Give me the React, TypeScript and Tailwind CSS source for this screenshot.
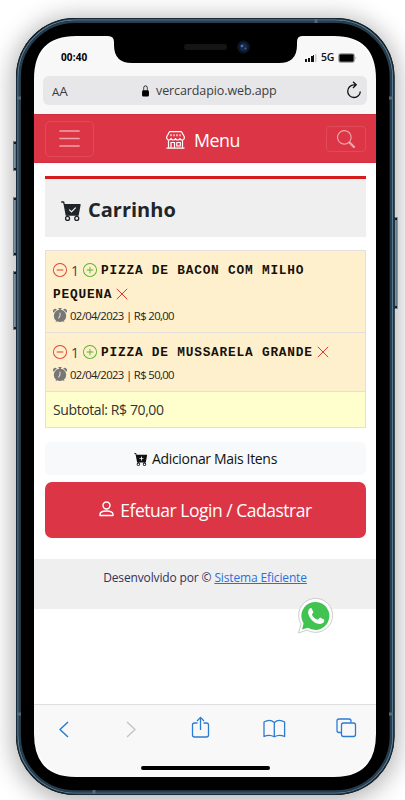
import React from "react";
import {
  BsSearch, BsCartCheckFill, BsCartPlusFill, BsDashCircle, BsPlusCircle,
  BsAlarmFill, BsLockFill,
} from "react-icons/bs";

const ui = "font-['Open_Sans','Noto_Sans',sans-serif]";

function Cross() {
  return (
    <svg viewBox="0 0 12 12" className="ml-1 inline-block h-3 w-3" stroke="#e0382c" strokeWidth="1" fill="none">
      <path d="M.8.8l10.4 10.4M11.2.8L.8 11.2" />
    </svg>
  );
}

function Item({ lines, price }: { lines: string[]; price: string }) {
  return (
    <li className="border-b border-[#e2e0d8] bg-[#fff0cd] pl-[7px] pt-[7px] pb-[4px]">
      <div className="flex h-[24px] items-center whitespace-nowrap">
        <BsDashCircle className="h-[14px] w-[14px] text-[#e23d30]" />
        <span className="w-[16px] text-center text-[14px] text-[#444]">1</span>
        <BsPlusCircle className="h-[14px] w-[14px] text-[#55b32b]" />
        <span className="ml-[4px] mt-[2px] font-['Liberation_Mono',monospace] text-[12.8px] tracking-[0.79px] font-bold text-[#16110b]">{lines[0]}</span>
        {lines.length === 1 && <Cross />}
      </div>
      {lines.length > 1 && (
        <div className="flex h-[23px] items-center whitespace-nowrap">
          <span className="mt-[2px] font-['Liberation_Mono',monospace] text-[12.8px] tracking-[0.79px] font-bold text-[#16110b]">{lines[1]}</span>
          <Cross />
        </div>
      )}
      <div className="flex h-[23px] items-center whitespace-nowrap">
        <BsAlarmFill className="mb-[3px] h-[14px] w-[14px] text-[#777]" />
        <span className="ml-[3px] text-[11.3px] tracking-[-0.63px] text-[#222]">02/04/2023 | R$ {price}</span>
      </div>
    </li>
  );
}

function StatusBar() {
  return (
    <div className="flex h-[40px] shrink-0 justify-between">
      <span className="ml-[27px] mt-[13px] text-[10px] font-bold leading-[16px] tracking-[0.15px] text-black">00:40</span>
      <div className="mr-[19px] mt-[15px] flex h-[14px] items-center">
        <svg width="12" height="8" viewBox="0 0 12 8">
          <path d="M0 5h2v3H0zM3 4h2v4H3zM6 2h2v6H6z" fill="#111" />
          <path d="M8 1h1v7H8z" fill="#111" />
          <path d="M10 0h1.5v8H10z" fill="#ccc" />
        </svg>
        <span className="ml-[4px] text-[10.5px] font-semibold tracking-[-0.3px] text-[#111]">5G</span>
        <svg className="ml-[4px]" width="19" height="10" viewBox="0 0 19 10">
          <rect x=".5" y=".5" width="16" height="9" rx="2" fill="none" stroke="#aaa" />
          <rect x="1.3" y="1.3" width="14.4" height="7.4" rx="1" fill="#000" />
          <path d="M17.5 3.5q1.4 1.5 0 3z" fill="#888" />
        </svg>
      </div>
    </div>
  );
}

function AddressBar() {
  return (
    <div className="mx-[9px] flex h-[29px] shrink-0 items-center rounded-[6px] bg-[#e7e7ea] text-[#3d3d40]">
      <span className="ml-[9px] w-[88px] leading-none"><span className="text-[11.5px]">A</span><span className="text-[13.5px]">A</span></span>
      <BsLockFill className="h-[12px] w-[11px] text-black" />
      <span className="ml-[5px] mt-[1px] whitespace-nowrap text-[12.5px] tracking-[-0.1px]">vercardapio.web.app</span>
      <svg className="mb-[2px] ml-auto mr-[5px]" width="16" height="18" viewBox="0 0 16 18" fill="none" stroke="#111" strokeWidth="1.3">
        <path d="M9.5 3.9H8a6.3 6.3 0 1 0 6.3 6.5M7 .8l3.2 3L7 7" />
      </svg>
    </div>
  );
}

function StoreIcon() {
  return (
    <svg width="19" height="18" viewBox="0 0 19 18" fill="none" stroke="white" strokeWidth="1.2" strokeLinejoin="round">
      <path d="M3.500.7h12l2.800 5v1.600q-.4 1.700-2.200 1.700t-2.200-1.500q-.5 1.500-2.200 1.500T9.500 7.500Q9 9 7.300 9T5.100 7.500Q4.600 9 2.900 9T.7 7.300V5.700zM2.500 9.500v7.500M16.500 9.500v7.500M.5 17.100h18M5 17v-5.500h3.500V17M10.800 11.500h3.500v3.500h-3.500zM5 3.200v2M8 3.200v2M11 3.200v2M14 3.200v2" />
    </svg>
  );
}

function Navbar() {
  return (
    <header className="mt-[9px] flex h-[49px] shrink-0 items-center border-y border-[#cf3141] bg-[#dc3545] pl-[11px] pr-[10px]">
      <div className="flex h-[36px] w-[49px] items-center justify-center rounded-[5px] border border-[#e14b59]">
        <svg width="21" height="17" viewBox="0 0 21 17" stroke="#f1a2aa" strokeWidth="1.7" strokeLinecap="round">
          <path d="M1 1h19M1 8.500h19M1 16h19" />
        </svg>
      </div>
      <div className="ml-[72px] mt-[3px] flex items-center text-white">
        <StoreIcon />
        <span className="ml-[9px] text-[17.8px] leading-[24px] tracking-[-0.5px]">Menu</span>
      </div>
      <div className="ml-auto flex h-[26px] w-[40px] items-center justify-center rounded-[4px] border border-[#e14b59] text-[#f1a2aa]">
        <BsSearch className="h-[18px] w-[18px]" />
      </div>
    </header>
  );
}

function Toolbar() {
  return (
    <div className="flex h-[73px] shrink-0 flex-col border-t border-[#dfdfe1] bg-[#f8f8f8]">
      <svg width="342" height="60" viewBox="34 705 342 60" fill="none" stroke="#2b7bd3" strokeWidth="1.3" strokeLinejoin="round">
        <path d="M68 722l-8 7.5 8 7.5" strokeWidth="1.5" />
        <path d="M127 722l8 7.5-8 7.5" stroke="#c5c5c8" strokeWidth="1.5" />
        <path d="M197.500 723h-3q-2 0-2 2v10q0 2 2 2h12q2 0 2-2v-10q0-2-2-2h-3M200.500 730v-12.500M197 721l3.500-3.600 3.500 3.600" />
        <path d="M274.300 722.500q-4.500-4-10.300-.5v14.500q5.500-2.500 10.300.3q4.800-2.800 10.300-.3v-14.500q-5.800-3.500-10.300.5zv14" />
        <rect x="341.500" y="723" width="14" height="13.500" rx="2" />
        <path d="M341 732.500h-2q-2 0-2-2v-9.500q0-2 2-2h10q2 0 2 2v1.500" />
      </svg>
      <div className="mx-auto mt-[1px] h-[4px] w-[129px] shrink-0 rounded-full bg-black" />
    </div>
  );
}

function Frame() {
  return (
    <svg className="pointer-events-none absolute inset-0" width="405" height="800" viewBox="0 0 405 800">
      <defs>
        <linearGradient id="button" x1="0" x2="1">
          <stop offset="0" stopColor="#52697a" /><stop offset=".5" stopColor="#8296a3" /><stop offset="1" stopColor="#405767" />
        </linearGradient>
      </defs>
      {[[13, 141, 30], [13, 197, 59], [13, 271, 59], [394, 217, 92]].map(([x, y, h]) => (
        <g key={y}>
          <rect x={x} y={y} width="3.500" height={h} fill="url(#button)" />
          <path d={`M${x + 1} ${y + 1}h2v2h-2zM${x + 1} ${y + h - 3}h2v2h-2z`} fill="#101c24" />
        </g>
      ))}
      <path fillRule="evenodd" fill="#000" d="M74.500 18H336A58.500 58.500 0 0 1 394.500 76.500V736.500A58.500 58.500 0 0 1 336 795H74.500A58.500 58.500 0 0 1 16 736.500V76.500A58.500 58.500 0 0 1 74.500 18ZM76 36Q34 36 34 79V734Q34 777 76 777H334Q376 777 376 734V79Q376 36 334 36H302Q297 36 297 42V45Q297 63 279 63H132Q114 63 114 45V42Q114 36 108 36Z" />
      <rect x="16.500" y="18.500" width="377.500" height="776" rx="58" fill="none" stroke="#172b3a" />
      <rect x="18" y="20" width="374.500" height="773" rx="57" fill="none" stroke="#58788d" strokeWidth="1.600" />
      <rect x="19.800" y="21.800" width="371" height="769.500" rx="55" fill="none" stroke="#263e50" strokeWidth="2.300" />
      <path d="M17 98h4M389 98h4M17 714h4M389 714h4M316 19v4M94 790v4" stroke="#596975" strokeWidth="3" />
      <rect x="184" y="44" width="43" height="6" rx="3" fill="#151515" />
      <circle cx="243.500" cy="47" r="6.500" fill="#0c1524" />
      <circle cx="243.500" cy="47" r="4" fill="#16294e" />
      <circle cx="242" cy="46" r="1.300" fill="#5474ad" />
      <circle cx="245.500" cy="48.500" r="1" fill="#405f91" />
    </svg>
  );
}

export default function App() {
  return (
    <div className={`relative h-[800px] w-[405px] overflow-hidden bg-white ${ui}`}>
      <div className="absolute left-[17px] top-[19px] h-[775px] w-[376px] rounded-[58px] shadow-[0_3px_24px_5px_rgba(0,0,0,0.3)]" />
      <main className="absolute left-[34px] top-[36px] flex h-[741px] w-[342px] flex-col overflow-hidden rounded-[41px] bg-[#f8f8f8]">
        <StatusBar />
        <AddressBar />
        <Navbar />
        <div className="flex min-h-0 flex-1 flex-col bg-white">
          <div className="ml-[11px] mr-[10px] mt-[13px] flex h-[61px] shrink-0 items-center border-t-[3px] border-[#d61d1d] bg-[#efefef] pl-[16px] pt-[4px] text-[#212529]">
            <BsCartCheckFill className="h-[21px] w-[21px]" />
            <h1 className="ml-[6px] text-[20px] font-bold leading-[26px] tracking-[0px]">Carrinho</h1>
          </div>
          <ul className="ml-[11px] mr-[10px] mt-[13px] shrink-0 border border-b-0 border-[#e2e0d8]">
            <Item lines={["PIZZA DE BACON COM MILHO", "PEQUENA"]} price="20,00" />
            <Item lines={["PIZZA DE MUSSARELA GRANDE"]} price="50,00" />
            <li className="flex h-[36px] items-center border-b border-[#e2e0d8] bg-[#ffffcd] pl-[7px] text-[14px] tracking-[-0.4px] text-[#333]">Subtotal: R$ 70,00</li>
          </ul>
          <button className="ml-[11px] mr-[10px] mt-[14px] flex h-[33px] shrink-0 items-center justify-center rounded-[5px] bg-[#f8f9fa] text-[14px] tracking-[-0.33px] text-[#111]">
            <BsCartPlusFill className="mr-[4px] h-[14px] w-[14px]" />Adicionar Mais Itens
          </button>
          <button className="ml-[11px] mr-[10px] mt-[7px] flex h-[56px] shrink-0 items-center justify-center rounded-[7px] bg-[#dc3545] text-[17.5px] tracking-[-0.48px] text-white">
            <svg className="mb-[2px] mr-[6px]" width="15" height="16" viewBox="0 0 15 16" fill="none" stroke="white" strokeWidth="1.400" strokeLinejoin="round">
              <circle cx="7.500" cy="4.500" r="3.500" /><path d="M1 14.500v-1.300q0-3.200 6.500-3.200t6.500 3.200v1.300z" />
            </svg>Efetuar Login / Cadastrar
          </button>
          <footer className="mt-[21px] h-[50px] shrink-0 bg-[#efefef] pt-[10px] text-center text-[12px] leading-[18px] tracking-[-0.14px] text-[#34305c]">
            Desenvolvido por © <a className="text-[#286fe0] underline">Sistema Eficiente</a>
          </footer>
        </div>
        <Toolbar />
      </main>
      <svg className="absolute left-[297px] top-[598px]" width="36" height="37" viewBox="0 0 36 37">
        <path d="M1.500 35l2.500-9A17 17 0 1 1 10 32z" fill="#fff" stroke="#ccc" />
        <path d="M5 31.500l1.600-6A14 14 0 1 1 11 29.800z" fill="#40c351" />
        <path d="M12.800 10.500c-5 4 2.500 15.500 10.200 15.500 3 0 4.600-2 4.300-4.200l-4.200-2.200c-1 .4-1.500 2-2.400 2.200-2.500-.5-5-3-5.800-5.200.2-.8 1.400-1.600 1.500-2.400l-1.800-4q-1-.7-1.800.3z" fill="#fff" />
      </svg>
      <Frame />
    </div>
  );
}
